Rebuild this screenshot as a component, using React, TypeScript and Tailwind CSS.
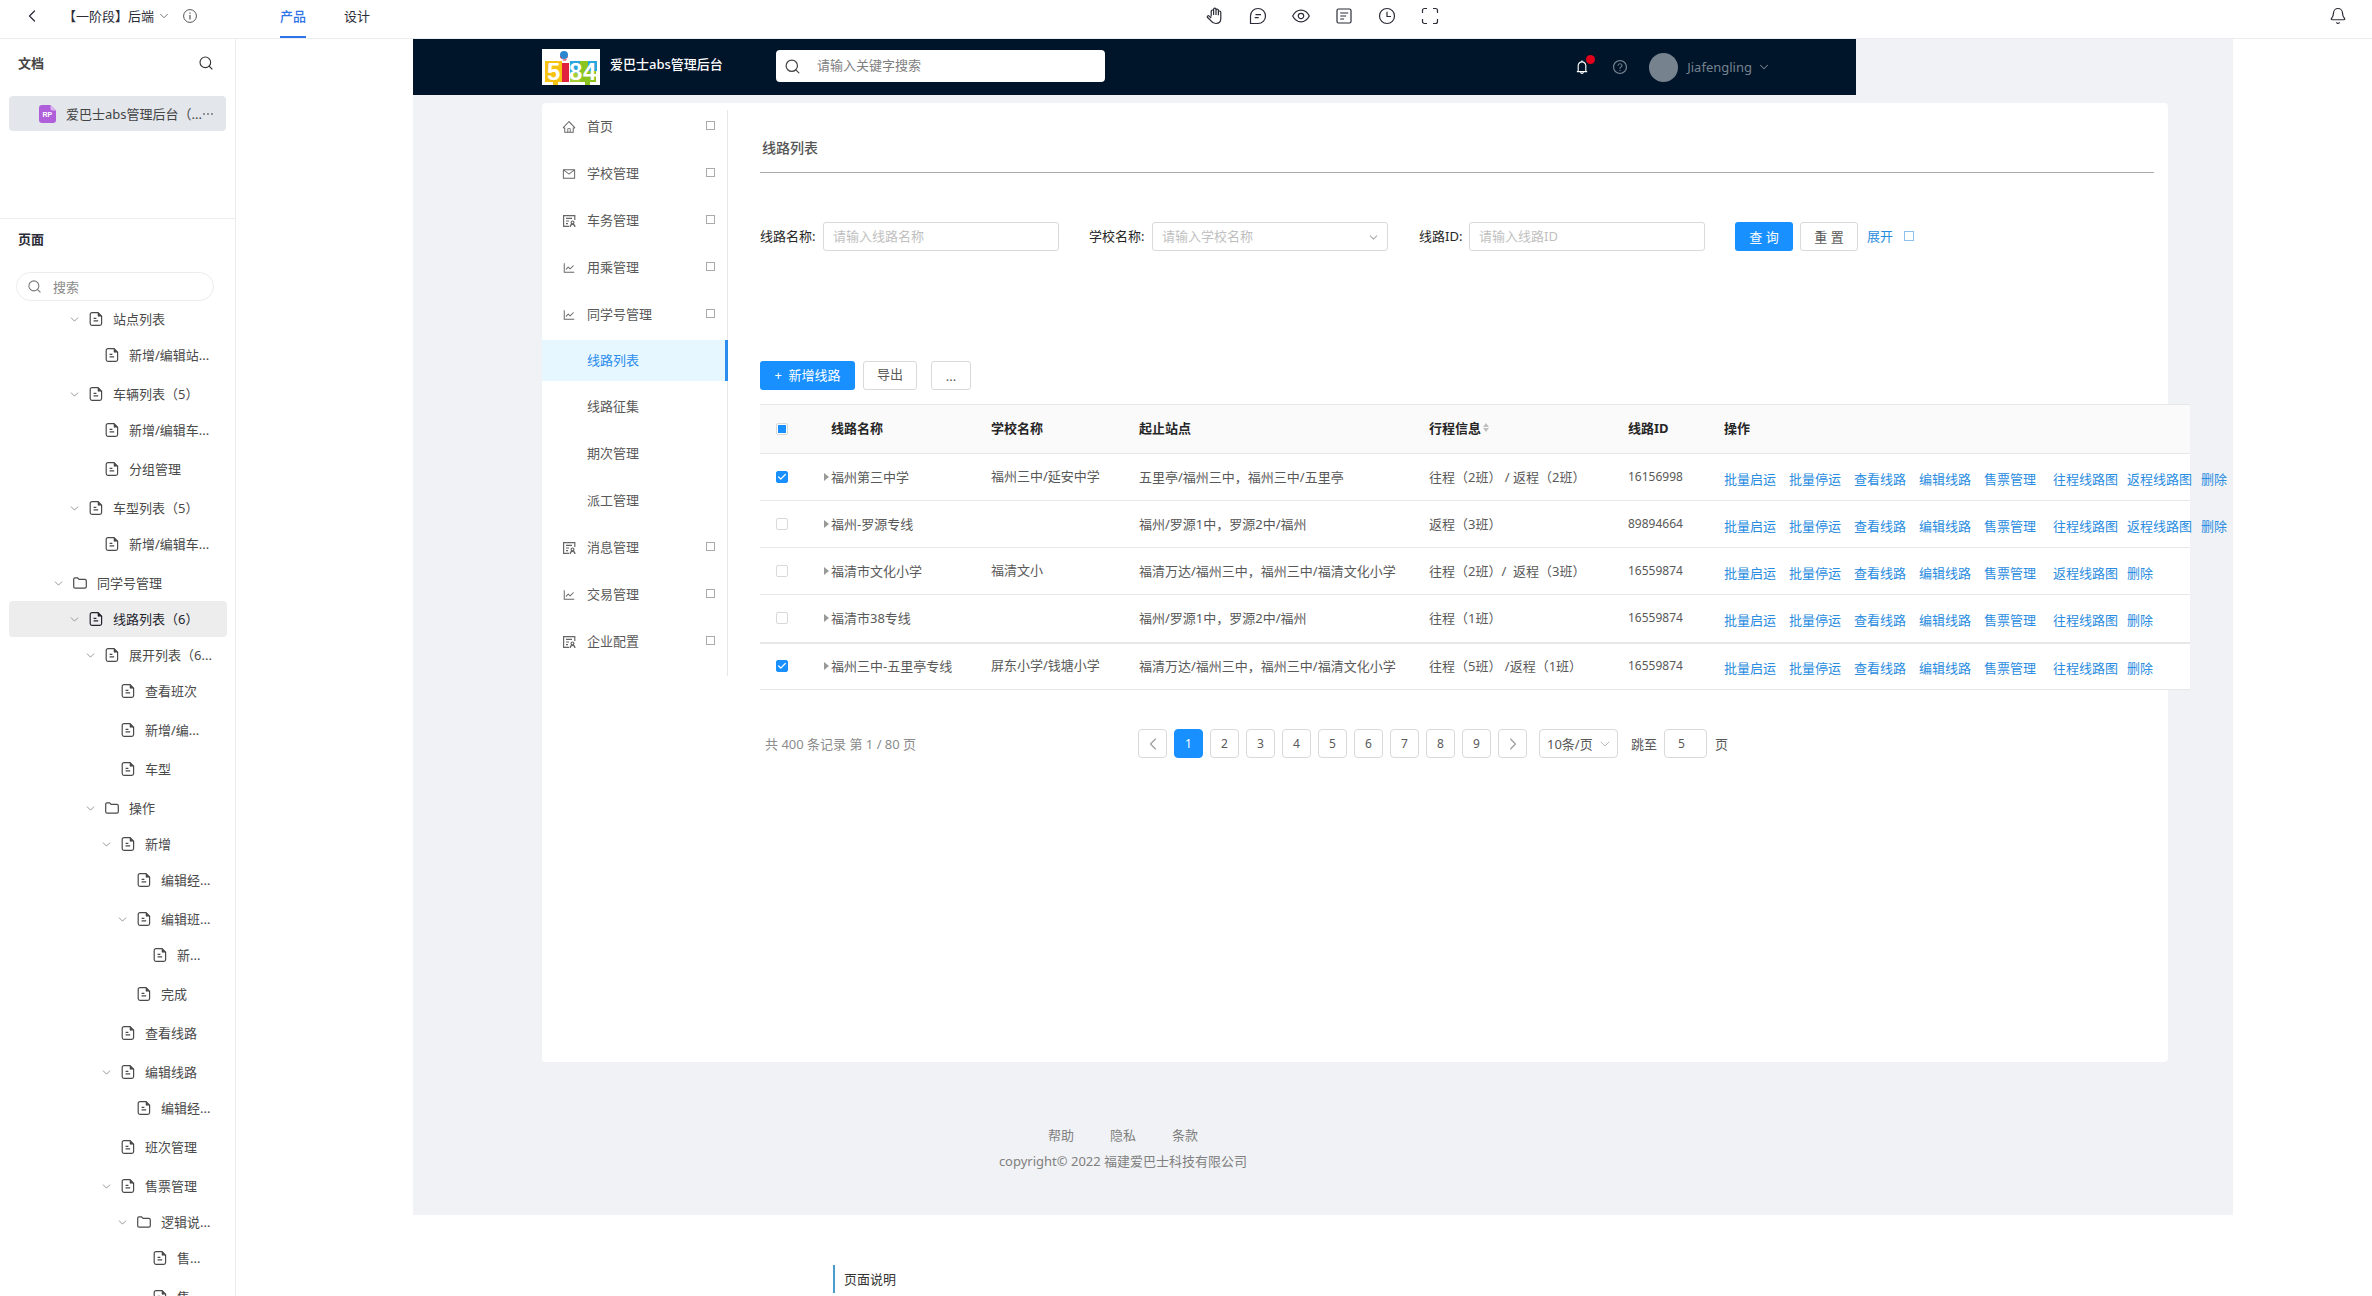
import { useState } from "react";
import clsx from "clsx";
import { Bell, Check, ChevronDown, ChevronLeft, ChevronRight, Search } from "lucide-react";
import {
    AiOutlineBell,
    AiOutlineHome,
    AiOutlineLineChart,
    AiOutlineMail,
    AiOutlineQuestionCircle,
} from "react-icons/ai";

type TreeNode = {
    label: string;
    level: number;
    kind?: 'page' | 'folder';
    open?: boolean;
    active?: boolean;
};

const TREE: TreeNode[] = [
    { label: '站点列表', level: 1, open: true },
    { label: '新增/编辑站...', level: 2 },
    { label: '车辆列表（5）', level: 1, open: true },
    { label: '新增/编辑车...', level: 2 },
    { label: '分组管理', level: 2 },
    { label: '车型列表（5）', level: 1, open: true },
    { label: '新增/编辑车...', level: 2 },
    { label: '同学号管理', level: 0, kind: 'folder', open: true },
    { label: '线路列表（6）', level: 1, open: true, active: true },
    { label: '展开列表（6...', level: 2, open: true },
    { label: '查看班次', level: 3 },
    { label: '新增/编...', level: 3 },
    { label: '车型', level: 3 },
    { label: '操作', level: 2, kind: 'folder', open: true },
    { label: '新增', level: 3, open: true },
    { label: '编辑经...', level: 4 },
    { label: '编辑班...', level: 4, open: true },
    { label: '新...', level: 5 },
    { label: '完成', level: 4 },
    { label: '查看线路', level: 3 },
    { label: '编辑线路', level: 3, open: true },
    { label: '编辑经...', level: 4 },
    { label: '班次管理', level: 3 },
    { label: '售票管理', level: 3, open: true },
    { label: '逻辑说...', level: 4, kind: 'folder', open: true },
    { label: '售...', level: 5 },
    { label: '售...', level: 5 },
];

const INDENT = ['pl-[43px]', 'pl-[59px]', 'pl-[75px]', 'pl-[91px]', 'pl-[107px]', 'pl-[123px]'];

// list with a small person in the corner
const StaffIcon = ({ size, className }: { size: number; className?: string }) => (
    <svg width={size} height={size} viewBox="0 0 14 14" fill="none" stroke="currentColor" strokeWidth="1.2" className={className}>
        <path d="M7 12.400H1.600V1.600h11.200V6M4 4.300h6M4 7h3M4 9.600h2" />
        <circle cx="10.500" cy="8.400" r="1.400" />
        <path d="M8.200 13c0-1.700 1-2.700 2.300-2.700s2.400 1 2.400 2.700" />
    </svg>
);

type MenuItem = {
    label: string;
    icon?: React.ComponentType<{ size: number; className?: string }>;
    active?: boolean;
};

const MENU: MenuItem[] = [
    { label: '首页', icon: AiOutlineHome },
    { label: '学校管理', icon: AiOutlineMail },
    { label: '车务管理', icon: StaffIcon },
    { label: '用乘管理', icon: AiOutlineLineChart },
    { label: '同学号管理', icon: AiOutlineLineChart },
    { label: '线路列表', active: true },
    { label: '线路征集' },
    { label: '期次管理' },
    { label: '派工管理' },
    { label: '消息管理', icon: StaffIcon },
    { label: '交易管理', icon: AiOutlineLineChart },
    { label: '企业配置', icon: StaffIcon },
];

const BASE_ACTIONS = ['批量启运', '批量停运', '查看线路', '编辑线路', '售票管理'];

const ROWS = [
    {
        checked: true,
        name: '福州第三中学',
        school: '福州三中/延安中学',
        stops: '五里亭/福州三中，福州三中/五里亭',
        trip: '往程（2班） / 返程（2班）',
        id: '16156998',
        actions: ['往程线路图', '返程线路图', '删除'],
    },
    {
        checked: false,
        name: '福州-罗源专线',
        school: '',
        stops: '福州/罗源1中，罗源2中/福州',
        trip: '返程（3班）',
        id: '89894664',
        actions: ['往程线路图', '返程线路图', '删除'],
    },
    {
        checked: false,
        name: '福清市文化小学',
        school: '福清文小',
        stops: '福清万达/福州三中，福州三中/福清文化小学',
        trip: '往程（2班）/  返程（3班）',
        id: '16559874',
        actions: ['返程线路图', '删除'],
    },
    {
        checked: false,
        name: '福清市38专线',
        school: '',
        stops: '福州/罗源1中，罗源2中/福州',
        trip: '往程（1班）',
        id: '16559874',
        actions: ['往程线路图', '删除'],
    },
    {
        checked: true,
        name: '福州三中-五里亭专线',
        school: '屏东小学/钱塘小学',
        stops: '福清万达/福州三中，福州三中/福清文化小学',
        trip: '往程（5班） /返程（1班）',
        id: '16559874',
        actions: ['往程线路图', '删除'],
    },
];

const PageIcon = () => (
    <svg width="14" height="14" viewBox="0 0 14 14" fill="none" stroke="currentColor" strokeWidth="1.2">
        <path d="M3 .6h6L12.600 4.200v7.400a1.800 1.800 0 0 1-1.800 1.800H3a1.800 1.800 0 0 1-1.800-1.800V2.400A1.800 1.800 0 0 1 3 .6z" />
        <path d="M9 .6v3.600h3.600z" fill="currentColor" strokeWidth=".6" />
        <path d="M4.600 6.400h2.800M4.600 8.800h4.600" />
    </svg>
);

const FolderIcon = () => (
    <svg width="14" height="14" viewBox="0 0 14 14" fill="none" stroke="currentColor" strokeWidth="1.2">
        <path d="M.7 3.2c0-.8.5-1.3 1.3-1.3h2.6l1.5 1.5h5.7c.9 0 1.5.6 1.5 1.4v5.9c0 .9-.6 1.4-1.5 1.4H2.2c-.9 0-1.5-.5-1.5-1.4z" />
    </svg>
);

const Logo = () => (
    <svg width="58" height="36" viewBox="0 0 58 36">
        <rect width="58" height="36" fill="#fff" />
        <path d="M3 12h17v21h-4v3h-5v-3H3z" fill="#f7c313" />
        <path d="M28 12h10v21H28z" fill="#2aa7dc" />
        <path d="M28 24h10v9H28z" fill="#a8cf38" />
        <path d="M38 12h16v12H38z" fill="#8cc41f" />
        <path d="M46 12h9v10h-9z" fill="#2aa7dc" />
        <path d="M38 24h16v9h-6v3h-5v-3h-5z" fill="#8cc41f" />
        <path d="M20 14h7v19h-7z" fill="#e0203c" />
        <circle cx="22" cy="6" r="4" fill="#2a86cf" />
        <path d="M18 6.500a4 4 0 0 0 8 0l-2 5h-3z" fill="#e0203c" />
        <g fill="#fff" fontFamily="Liberation Sans, sans-serif" fontWeight="bold" fontSize="24">
            <text x="5" y="31">5</text>
            <text x="27" y="31">8</text>
            <text x="41" y="31">4</text>
        </g>
    </svg>
);

const TOOLS = [
    {
        name: '拖动',
        d: 'M5.2 9.5V4.2a1.2 1.2 0 0 1 2.4 0V2.4a1.2 1.2 0 0 1 2.4 0v1a1.2 1.2 0 0 1 2.4 0v1.8a1.2 1.2 0 0 1 2.4 0v6.3c0 3-2 5-4.9 5-2.400 0-3.700-.9-4.900-2.700L1.400 10.300c-.6-1.200.8-2.100 1.800-1.200l2 1.900M7.600 4v4M10 3v5M12.400 4.500v3.700',
    },
    { name: '评论', d: 'M1.500 16.500V9a7.500 7.500 0 1 1 7.500 7.500zM6.500 7.700h5.500M5.700 10.700h4' },
    {
        name: '预览',
        d: 'M.7 9C2.500 5.500 5.500 3.200 9 3.200S15.500 5.500 17.300 9c-1.800 3.500-4.800 5.800-8.300 5.800S2.500 12.500.7 9zM11.700 9a2.700 2.700 0 1 1-5.400 0 2.700 2.700 0 0 1 5.400 0z',
    },
    {
        name: '说明',
        d: 'M3.500 2h11c.9 0 1.500.6 1.500 1.500v11c0 .9-.6 1.500-1.500 1.500h-11c-.9 0-1.500-.6-1.500-1.500v-11C2 2.600 2.600 2 3.500 2zM5.200 6h8M5.200 9h6M5.200 12h3.800',
    },
    { name: '历史', d: 'M16.500 9a7.500 7.500 0 1 1-15 0 7.500 7.500 0 0 1 15 0zM9 4.800v4.700h4' },
    { name: '全屏', d: 'M1.500 6V3.500c0-1.200.8-2 2-2H6M12 1.500h2.500c1.200 0 2 .8 2 2V6M16.500 12v2.500c0 1.200-.8 2-2 2H12M6 16.500H3.500c-1.200 0-2-.8-2-2V12' },
];

const TopBar = () => (
    <header className="flex h-[39px] shrink-0 items-center border-b border-[#ececee] bg-white text-[#2b2c37]">
        <div className="flex w-[370px] shrink-0 items-center self-stretch pb-[6px]">
            <button type="button" aria-label="返回" className="ml-[22px]">
                <ChevronLeft size={20} strokeWidth={1.5} />
            </button>
            <button type="button" className="ml-[21px] flex items-center gap-[3px] whitespace-nowrap">
                【一阶段】后端
                <ChevronDown size={14} strokeWidth={1.5} className="text-[#666]" />
            </button>
            <button type="button" aria-label="信息" className="ml-3 text-[#555]">
                <svg width="14" height="14" viewBox="0 0 14 14" fill="none" stroke="currentColor">
                    <circle cx="7" cy="7" r="6.400" />
                    <path d="M7 6v4.500M7 3.400v1.300" strokeWidth="1.200" />
                </svg>
            </button>
            <nav className="-mb-[6px] ml-auto flex gap-[38px] self-stretch">
                <a href="#product" className="flex items-center border-b-2 border-[#2f74e8] pb-[5px] font-medium text-[#2f74e8]">产品</a>
                <a href="#design" className="flex items-center border-b-2 border-transparent pb-[5px]">设计</a>
            </nav>
        </div>
        <div className="flex flex-1 items-center justify-center gap-[25px] pb-[6px] pl-[2px]">
            {TOOLS.map((tool) => (
                <button key={tool.name} type="button" aria-label={tool.name}>
                    <svg width="18" height="18" viewBox="0 0 18 18" fill="none" stroke="currentColor" strokeWidth="1.200">
                        <path d={tool.d} />
                    </svg>
                </button>
            ))}
        </div>
        <div className="flex w-[99px] shrink-0 justify-end pr-[25px] pb-[6px]">
            <button type="button" aria-label="通知">
                <Bell size={18} strokeWidth={1.6} />
            </button>
        </div>
    </header>
);

const ProjectSidebar = () => (
    <aside className="flex w-[236px] shrink-0 flex-col overflow-hidden border-r border-[#ececee] bg-white">
        <div className="h-[180px] shrink-0 border-b border-[#ececee]">
            <div className="flex items-center justify-between pt-[14px] pr-[21px] pl-[18px]">
                <h2 className="font-bold text-[#444]">文档</h2>
                <button type="button" aria-label="搜索文档">
                    <Search size={16} strokeWidth={1.7} className="text-[#333]" />
                </button>
            </div>
            <div className="mt-[23px] mr-[9px] ml-[9px] flex h-[35px] items-center rounded bg-[#e3e6eb] pl-[30px] text-[#444]">
                <svg width="17" height="18" viewBox="0 0 17 18" className="shrink-0">
                    <path d="M3 0h8.500L17 5.500V15a3 3 0 0 1-3 3H3a3 3 0 0 1-3-3V3a3 3 0 0 1 3-3z" fill="#b05fdb" />
                    <path d="M11.500 0 17 5.500h-3.500a2 2 0 0 1-2-2z" fill="#dcb4f0" />
                    <text x="3.500" y="12" fontSize="7" fontWeight="bold" fill="#fff" fontFamily="Liberation Sans, sans-serif">RP</text>
                </svg>
                <a href="#doc" className="ml-[10px] whitespace-nowrap">爱巴士abs管理后台（...</a>
                <button type="button" aria-label="更多" className="ml-px flex gap-[2px]">
                    <span className="size-[2px] rounded-full bg-[#777]" />
                    <span className="size-[2px] rounded-full bg-[#777]" />
                    <span className="size-[2px] rounded-full bg-[#777]" />
                </button>
            </div>
        </div>
        <h2 className="mt-[10px] ml-[18px] font-bold text-[#2b2c37]">页面</h2>
        <label className="mt-[23px] mr-[21px] ml-4 flex h-[29px] shrink-0 items-center gap-[11px] rounded-full border border-[#ececee] pl-[10px]">
            <Search size={15} strokeWidth={1.7} className="shrink-0 text-[#777]" />
            <input type="text" aria-label="搜索页面" placeholder="搜索" className="w-full bg-transparent outline-none placeholder:text-[#8b8b8b]" />
        </label>
        <ul>
            {TREE.map((node, index) => (
                <li
                    key={index}
                    className={clsx(
                        "mr-2 ml-[9px] flex h-9 items-center rounded",
                        INDENT[node.level],
                        !node.open && "mb-[3px]",
                        node.active ? "bg-[#ededed] text-[#23242e]" : "text-[#4a4a4a]"
                    )}
                >
                    <span className="w-[21px] shrink-0">
                        {node.open && <ChevronDown size={13} strokeWidth={1.6} className="text-[#888]" />}
                    </span>
                    {node.kind === 'folder' ? <FolderIcon /> : <PageIcon />}
                    <a href="#page" className="ml-[10px] whitespace-nowrap">{node.label}</a>
                </li>
            ))}
        </ul>
    </aside>
);

const AdminHeader = () => (
    <div className="mr-[377px] flex h-14 items-center bg-[#00152a] pr-[85px] pl-[129px]">
        <Logo />
        <h1 className="mb-[6px] ml-[10px] w-[166px] font-medium whitespace-nowrap text-white">爱巴士abs管理后台</h1>
        <label className="mb-[2px] flex h-8 w-[329px] items-center gap-4 rounded bg-white pl-2">
            <Search size={17} strokeWidth={1.7} className="text-[#444]" />
            <input type="text" aria-label="关键字" placeholder="请输入关键字搜索" className="pb-[3px] outline-none placeholder:text-[#808080]" />
        </label>
        <div className="ml-auto flex items-center text-[#76828e]">
            <button type="button" aria-label="消息" className="relative text-white">
                <AiOutlineBell size={16} />
                <span className="absolute -top-1 -right-[5px] size-[9px] rounded-full bg-[#e3001b]" />
            </button>
            <button type="button" aria-label="帮助" className="ml-[22px]">
                <AiOutlineQuestionCircle size={16} />
            </button>
            <button type="button" className="ml-[21px] flex items-center">
                <span className="size-[29px] rounded-full bg-[#76828e]" />
                <span className="ml-[9px]">Jiafengling</span>
                <ChevronDown size={14} strokeWidth={1.8} className="ml-[5px]" />
            </button>
        </div>
    </div>
);

const AdminMenu = () => (
    <ul className="mt-[7px] h-[566px] w-[186px] shrink-0 border-r border-[#e8e8e8]">
        {MENU.map(({ label, icon: Icon, active }) => (
            <li key={label}>
                <a
                    href="#menu"
                    className={clsx(
                        "flex items-center pl-5",
                        active
                            ? "-mr-px mt-[3px] mb-px h-[41px] border-r-3 border-[#2a8cec] bg-[#e6f7ff] pb-[2px] text-[#2a8cec]"
                            : "h-[47px] text-[#595959]",
                        label === '首页' && "-mt-2"
                    )}
                >
                    <span className="w-[25px]">{Icon && <Icon size={14} className="mt-[2px] text-[#666]" />}</span>
                    {label}
                    {Icon && <span className="mr-3 mb-px ml-auto size-[9px] border border-[#aaa]" />}
                </a>
            </li>
        ))}
    </ul>
);

const Filters = () => (
    <form className="mt-[49px] flex items-center text-[#262626]">
        <label htmlFor="lineName" className="w-[63px] pb-px">线路名称:</label>
        <input
            id="lineName"
            type="text"
            placeholder="请输入线路名称"
            className="h-[29px] w-[236px] rounded-[3px] border border-[#d9d9d9] px-[9px] pb-[2px] outline-none placeholder:text-[#bfbfbf]"
        />
        <label htmlFor="schoolName" className="ml-[30px] w-[63px] pb-px">学校名称:</label>
        <div className="relative">
            <select
                id="schoolName"
                className="h-[29px] w-[236px] appearance-none rounded-[3px] border border-[#d9d9d9] px-[9px] pb-[2px] text-[#bfbfbf] outline-none"
            >
                <option>请输入学校名称</option>
            </select>
            <ChevronDown size={13} className="pointer-events-none absolute top-[9px] right-2 text-[#aaa]" />
        </div>
        <label htmlFor="lineId" className="ml-[31px] w-[50px] pb-px">线路ID:</label>
        <input
            id="lineId"
            type="text"
            placeholder="请输入线路ID"
            className="h-[29px] w-[236px] rounded-[3px] border border-[#d9d9d9] px-[9px] pb-[2px] outline-none placeholder:text-[#bfbfbf]"
        />
        <button type="submit" className="ml-[30px] h-[29px] w-[58px] rounded-[3px] bg-[#1890ff] text-white">查 询</button>
        <button type="reset" className="ml-[7px] h-[29px] w-[58px] rounded-[3px] border border-[#d9d9d9] text-[#595959]">重 置</button>
        <a href="#more" className="ml-[9px] flex items-center pb-[2px] text-[#2a8ce0]">
            展开
            <span className="ml-[11px] size-[10px] border border-[#8fc0ea]" />
        </a>
    </form>
);

type CheckBoxProps = {
    label: string;
    checked: boolean;
    partial?: boolean;
    onChange: () => void;
};

const CheckBox = ({ label, checked, partial, onChange }: CheckBoxProps) => (
    <span className="relative block size-3">
        <input
            type="checkbox"
            aria-label={label}
            checked={checked}
            onChange={onChange}
            className="block size-3 appearance-none rounded-[2px] border border-[#d9d9d9] bg-white checked:border-[#1890ff] checked:bg-[#1890ff]"
        />
        {partial && <span className="pointer-events-none absolute top-[2px] left-[2px] size-2 bg-[#1890ff]" />}
        {checked && <Check size={10} strokeWidth={3} className="pointer-events-none absolute top-px left-px text-white" />}
    </span>
);

const LineTable = () => {
    const [selected, setSelected] = useState<boolean[]>(ROWS.map((row) => row.checked));
    const allChecked = selected.every(Boolean);

    const toggle = (index: number) => {
        setSelected(selected.map((value, i) => (i === index ? !value : value)));
    };

    return (
        <div className="mt-[14px] mr-[-22px]">
            <table className="w-full table-fixed bg-white text-left whitespace-nowrap text-[#595959]">
                <colgroup>
                    <col className="w-[64px]" />
                    <col className="w-[167px]" />
                    <col className="w-[148px]" />
                    <col className="w-[290px]" />
                    <col className="w-[199px]" />
                    <col className="w-[96px]" />
                    <col />
                </colgroup>
                <thead className="bg-[#fafafa] text-[#262626]">
                    <tr className="h-[49px] border-y border-[#e8e8e8]">
                        <th className="pb-px pl-4">
                            <CheckBox
                                label="全选"
                                checked={allChecked}
                                partial={!allChecked && selected.some(Boolean)}
                                onChange={() => setSelected(selected.map(() => !allChecked))}
                            />
                        </th>
                        <th className="pb-[3px] pl-[7px] font-bold">线路名称</th>
                        <th className="pb-[3px] font-bold">学校名称</th>
                        <th className="pb-[3px] font-bold">起止站点</th>
                        <th className="pb-[3px] font-bold">
                            <span className="flex items-center gap-[2px]">
                                行程信息
                                <svg width="6" height="9" viewBox="0 0 6 9" fill="#bfbfbf">
                                    <path d="M3 0 6 4H0zM3 9 0 5h6z" />
                                </svg>
                            </span>
                        </th>
                        <th className="pb-[3px] font-bold">线路ID</th>
                        <th className="pb-[3px] font-bold">操作</th>
                    </tr>
                </thead>
                <tbody>
                    {ROWS.map((row, index) => (
                        <tr
                            key={row.name}
                            className={clsx(
                                "border-[#e8e8e8]",
                                index === 3 ? "h-12 border-b-2" : "h-[47px] border-b"
                            )}
                        >
                            <td className="pb-px pl-4">
                                <CheckBox label={row.name} checked={selected[index]} onChange={() => toggle(index)} />
                            </td>
                            <td className="pb-px">
                                <span className="flex items-center gap-[2px]">
                                    <svg width="5" height="8" viewBox="0 0 5 8" fill="#999">
                                        <path d="M0 0 5 4 0 8z" />
                                    </svg>
                                    {row.name}
                                </span>
                            </td>
                            <td className="pb-[3px]">{row.school}</td>
                            <td className="pb-px">{row.stops}</td>
                            <td className="pb-px whitespace-pre">{row.trip}</td>
                            <td className="pb-px text-xs">{row.id}</td>
                            <td className="pt-1">
                                <div className="flex text-[#2a8ce0]">
                                    {BASE_ACTIONS.map((action) => (
                                        <a key={action} href="#action" className="w-[65px] shrink-0">{action}</a>
                                    ))}
                                    <span className="ml-1 flex gap-[9px]">
                                        {row.actions.map((action) => (
                                            <a key={action} href="#action">{action}</a>
                                        ))}
                                    </span>
                                </div>
                            </td>
                        </tr>
                    ))}
                </tbody>
            </table>
        </div>
    );
};

const Pagination = () => {
    const [page, setPage] = useState(1);

    return (
        <div className="mt-[39px] flex items-center pl-[5px] text-[#595959]">
            <p className="w-[373px] text-[#8c8c8c]">共 400 条记录 第 1 / 80 页</p>
            <div className="flex gap-[7px]">
                <button type="button" aria-label="上一页" className="flex size-[29px] items-center justify-center rounded border border-[#d9d9d9]">
                    <ChevronLeft size={20} strokeWidth={1.3} className="text-[#999]" />
                </button>
                {[1, 2, 3, 4, 5, 6, 7, 8, 9].map((n) => (
                    <button
                        key={n}
                        type="button"
                        onClick={() => setPage(n)}
                        className={clsx(
                            "size-[29px] rounded border text-xs",
                            n === page ? "border-[#1890ff] bg-[#1890ff] text-white" : "border-[#d9d9d9]"
                        )}
                    >
                        {n}
                    </button>
                ))}
                <button type="button" aria-label="下一页" className="flex size-[29px] items-center justify-center rounded border border-[#d9d9d9]">
                    <ChevronRight size={20} strokeWidth={1.3} className="text-[#999]" />
                </button>
            </div>
            <div className="relative ml-3">
                <select aria-label="每页条数" className="h-[29px] w-[79px] appearance-none rounded border border-[#d9d9d9] pl-[7px] outline-none">
                    <option>10条/页</option>
                </select>
                <ChevronDown size={16} strokeWidth={1.5} className="pointer-events-none absolute top-[7px] right-[5px] text-[#bbb]" />
            </div>
            <label htmlFor="jump" className="ml-[13px] w-[33px]">跳至</label>
            <input
                id="jump"
                type="text"
                defaultValue="5"
                className="h-[29px] w-[43px] rounded border border-[#d9d9d9] pl-[13px] text-xs outline-none"
            />
            <span className="ml-2">页</span>
        </div>
    );
};

const App = () => {
    return (
        <div className="flex h-screen flex-col overflow-hidden bg-white font-['Noto_Sans','Noto_Sans_CJK_SC',sans-serif] text-[13px] leading-5">
            <TopBar />
            <div className="flex min-h-0 flex-1">
                <ProjectSidebar />
                <main className="min-w-0 flex-1 overflow-hidden pr-[139px] pl-[177px]">
                    <div className="bg-[#f0f2f5] pb-11">
                        <AdminHeader />
                        <div className="mt-2 mr-[65px] ml-[129px] flex min-h-[959px] rounded-sm bg-white">
                            <AdminMenu />
                            <section className="min-w-0 flex-1 pl-8">
                                <div className="mr-[14px] border-b border-[#aaa] pt-[35px] pb-[14px] pl-[2px]">
                                    <h2 className="text-sm font-medium text-[#555]">线路列表</h2>
                                </div>
                                <Filters />
                                <div className="mt-[110px] flex">
                                    <button type="button" className="h-[29px] w-[95px] rounded-[3px] bg-[#1890ff] pb-px text-white">
                                        +&nbsp; 新增线路
                                    </button>
                                    <button type="button" className="ml-2 h-[29px] w-[54px] rounded-[3px] border border-[#d9d9d9] pb-1 text-[#595959]">导出</button>
                                    <button type="button" className="ml-[14px] h-[29px] w-[40px] rounded-[3px] border border-[#d9d9d9] text-[#595959]">...</button>
                                </div>
                                <LineTable />
                                <Pagination />
                            </section>
                        </div>
                        <footer className="mt-[63px] mr-[400px] text-center text-[#808080]">
                            <nav className="flex justify-center gap-[36px]">
                                <a href="#help">帮助</a>
                                <a href="#privacy">隐私</a>
                                <a href="#terms">条款</a>
                            </nav>
                            <p className="mt-[6px]">copyright© 2022 福建爱巴士科技有限公司</p>
                        </footer>
                    </div>
                    <div className="mt-[50px] ml-[420px] h-7 border-l-2 border-[#4a9bd0] pl-[9px] leading-7 text-[#333]">页面说明</div>
                </main>
            </div>
        </div>
    );
}

export default App;
